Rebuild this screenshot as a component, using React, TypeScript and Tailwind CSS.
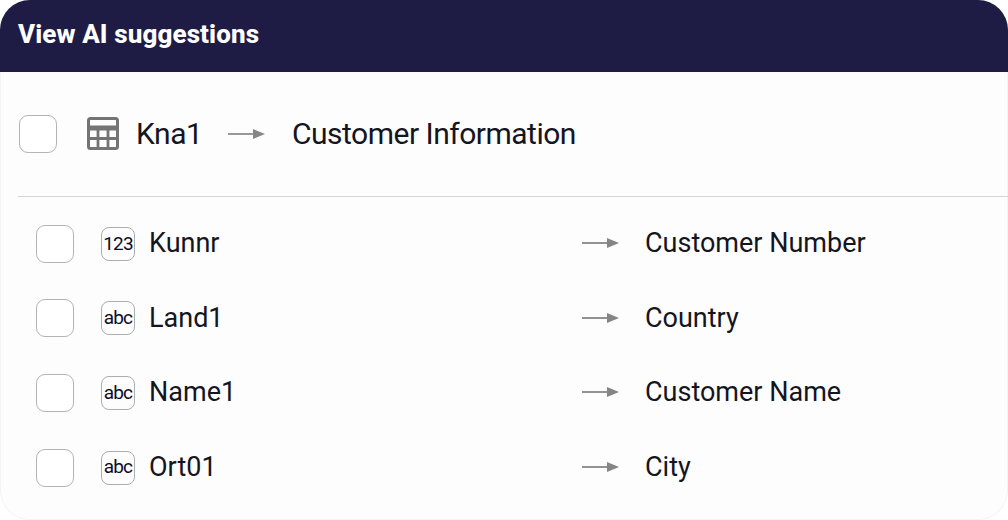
const ROWS = [
  { id: 'Kunnr', type: '123', label: 'Customer Number' },
  { id: 'Land1', type: 'abc', label: 'Country' },
  { id: 'Name1', type: 'abc', label: 'Customer Name' },
  { id: 'Ort01', type: 'abc', label: 'City' },
]

function Arrow({ className }: { className: string }) {
  return (
    <svg className={className} viewBox="0 0 37 14" fill="none">
      <path d="M0 7H26" stroke="#777777" strokeWidth="1.6" />
      <path d="M25 2L37 7L25 12Z" fill="#858585" />
    </svg>
  )
}

function TableIcon() {
  return (
    <svg className="w-[32px] h-[33px] shrink-0" viewBox="0 0 32 33" fill="none">
      <rect x="1.5" y="1.5" width="29" height="30" rx="2" stroke="#747474" strokeWidth="3" />
      <path d="M1.5 11H30.5" stroke="#747474" strokeWidth="5" />
      <path d="M1.5 21.5H30.5M11 11V31M21 11V31" stroke="#747474" strokeWidth="2.8" />
    </svg>
  )
}

function Checkbox() {
  return <div className="w-[38px] h-[38px] shrink-0 rounded-[9px] border border-[#b4b4b4] bg-white" />
}

export default function App() {
  return (
    <div className="w-[1008px] h-[520px] overflow-hidden bg-[#fdfdfd] rounded-[30px] shadow-[inset_0_0_0_1px_#f3f3f3] font-['Roboto',sans-serif] text-[#15151f]">
      <div className="h-[72px] bg-[#1e1c45] flex items-center pl-[18px] pb-[3px]">
        <h1 className="text-[26px] font-extrabold text-white tracking-[0.1px]">View AI suggestions</h1>
      </div>

      <div className="ml-[18px] h-[123px] flex items-center pl-[1px] pb-[1px] border-b border-[#d6d6d6] box-content">
        <Checkbox />
        <div className="ml-[30px]">
          <TableIcon />
        </div>
        <span className="ml-[17px] w-[92px] text-[30px] leading-none tracking-[-0.45px]">Kna1</span>
        <Arrow className="w-[37px] h-[14px]" />
        <span className="ml-[27px] text-[30px] leading-none tracking-[-0.5px]">Customer Information</span>
      </div>

      <div className="pl-[36px] pt-[9.5px] flex flex-col">
        {ROWS.map(row => (
          <div key={row.id} className="h-[74.6px] flex items-center">
            <Checkbox />
            <div className="ml-[27px] w-[34px] h-[34px] shrink-0 rounded-[8px] border border-[#adadad] flex items-center justify-center text-[19px] tracking-[-0.8px] text-[#0c0c28]">
              {row.type}
            </div>
            <span className="ml-[14px] w-[433px] text-[27px] leading-none">{row.id}</span>
            <Arrow className="w-[37px] h-[14px] -mt-[1px]" />
            <span className="ml-[26px] text-[27px] leading-none">{row.label}</span>
          </div>
        ))}
      </div>
    </div>
  )
}
